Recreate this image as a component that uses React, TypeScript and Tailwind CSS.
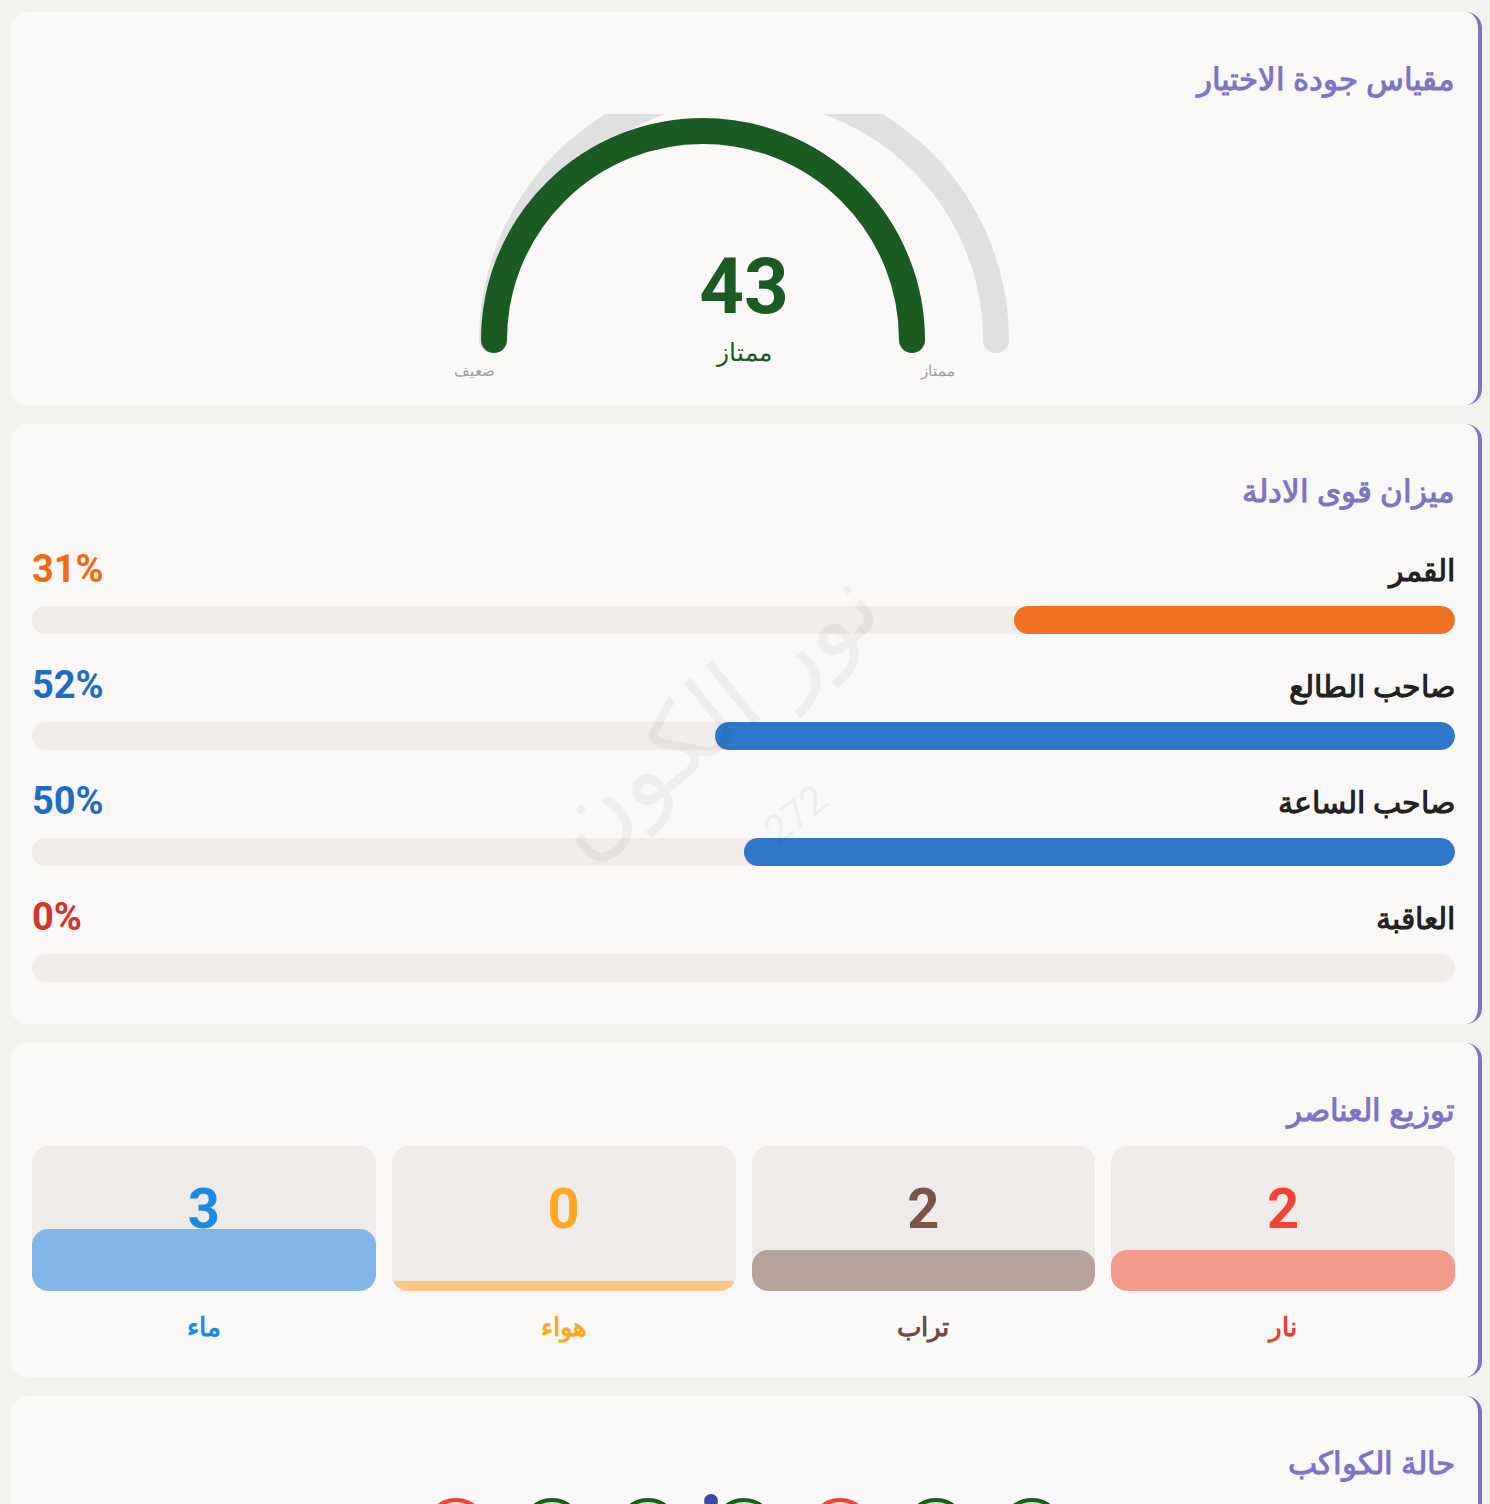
import React from "react";

const forces = [
  { id: "moon", label: "القمر", pct: 31, bar: "bg-[#f07022]", text: "text-[#f06a10]" },
  { id: "asc", label: "صاحب الطالع", pct: 52, bar: "bg-[#3077cc]", text: "text-[#1f6cc6]" },
  { id: "hour", label: "صاحب الساعة", pct: 50, bar: "bg-[#3077cc]", text: "text-[#1f6cc6]" },
  { id: "end", label: "العاقبة", pct: 0, bar: "bg-[#d33a2c]", text: "text-[#d0362a]" },
];

// listed right to left
const elements = [
  { id: "fire", label: "نار", count: 2, num: "text-[#f44336]", fill: "bg-[#f29a8c]", name: "text-[#e8402f]" },
  { id: "earth", label: "تراب", count: 2, num: "text-[#795548]", fill: "bg-[#b5a298]", name: "text-[#6d4c41]" },
  { id: "air", label: "هواء", count: 0, num: "text-[#ffa726]", fill: "bg-[#f8c884]", name: "text-[#f9a825]" },
  { id: "water", label: "ماء", count: 3, num: "text-[#1e88e5]", fill: "bg-[#82b5e8]", name: "text-[#1e88e5]" },
];

// listed right to left
const planets = [
  { id: "p1", bad: false, dot: false },
  { id: "p2", bad: false, dot: false },
  { id: "p3", bad: true, dot: false },
  { id: "p4", bad: false, dot: true },
  { id: "p5", bad: false, dot: false },
  { id: "p6", bad: false, dot: false },
  { id: "p7", bad: true, dot: false },
];

const Card = ({ title, children, className = "" }: { title: string; children: React.ReactNode; className?: string }) => (
  <section
    className={`rounded-2xl bg-[#f9f8f6] border-r-4 border-[#7f73c8] pl-[21px] pr-[23px] pt-[46px] ${className}`}
  >
    <h2 className="text-[31px] leading-10 font-semibold text-[#7e74c6]">{title}</h2>
    {children}
  </section>
);

const Gauge = () => (
  <div dir="ltr" className="mt-4 flex justify-center">
    <svg width="600" height="271" viewBox="0 0 600 271">
      <path d="M 48 226 A 252 252 0 0 1 552 226" fill="none" stroke="#e0e0e0" strokeWidth="26" strokeLinecap="round" />
      <path d="M 50 226 A 209 209 0 0 1 468 226" fill="none" stroke="#1b5a20" strokeWidth="26" strokeLinecap="round" />
      <text x="300" y="199" textAnchor="middle" fontSize="78" fontWeight="700" fill="#1b5a20" fontFamily="Roboto, sans-serif">
        43
      </text>
      <text x="300" y="247" textAnchor="middle" fontSize="25" fill="#1b5a20" fontFamily="'Noto Sans', sans-serif">
        ممتاز
      </text>
      <text x="30" y="262" textAnchor="middle" fontSize="15" fill="#9e9e9e" fontFamily="'Noto Sans', sans-serif">
        ضعيف
      </text>
      <text x="494" y="262" textAnchor="middle" fontSize="15" fill="#9e9e9e" fontFamily="'Noto Sans', sans-serif">
        ممتاز
      </text>
    </svg>
  </div>
);

export default function App() {
  return (
    <div
      dir="rtl"
      className="min-h-screen bg-[#f3f2ef] pl-[11px] pr-[8px] pt-3 pb-10 flex flex-col gap-[19px]"
      style={{ fontFamily: "'Noto Sans', Roboto, sans-serif" }}
    >
      <Card title="مقياس جودة الاختيار" className="pb-5">
        <Gauge />
      </Card>

      <Card title="ميزان قوى الادلة" className="pb-[42px]">
        <div className="mt-[39px] flex flex-col gap-[31px]">
          {forces.map((f) => (
            <div key={f.id}>
              <div className="flex h-10 items-center justify-between">
                <span className="text-[30px] font-semibold text-[#222]">{f.label}</span>
                <span className={`text-[38px] font-bold ${f.text}`} style={{ fontFamily: "Roboto, sans-serif" }}>
                  {f.pct}%
                </span>
              </div>
              <div className="mt-[17px] h-7 rounded-full bg-[#efece9] overflow-hidden">
                <div className={`h-full rounded-full ${f.bar}`} style={{ width: `${f.pct}%` }} />
              </div>
            </div>
          ))}
        </div>
      </Card>

      <Card title="توزيع العناصر" className="pb-[35px]">
        <div className="mt-[17px] grid grid-cols-4 gap-4">
          {elements.map((e) => (
            <div key={e.id} className="flex flex-col items-center">
              <div className="relative h-[145px] w-full overflow-hidden rounded-2xl bg-[#efebe8]">
                <div
                  className={`absolute bottom-0 left-0 right-0 rounded-2xl ${e.fill}`}
                  style={{ height: e.count ? `${(e.count / 7) * 100}%` : "10px" }}
                />
                <div
                  className={`relative pt-[36px] text-center text-[56px] leading-[54px] font-bold ${e.num}`}
                  style={{ fontFamily: "Roboto, sans-serif" }}
                >
                  {e.count}
                </div>
              </div>
              <span className={`mt-[19px] text-[26px] leading-8 font-semibold ${e.name}`}>{e.label}</span>
            </div>
          ))}
        </div>
      </Card>

      <Card title="حالة الكواكب" className="pb-10">
        <div className="mt-4 flex justify-center gap-8">
          {planets.map((p) => (
            <div
              key={p.id}
              className={`relative h-16 w-16 rounded-full border-4 ${
                p.bad ? "border-[#f44336] bg-[#fde3df]" : "border-[#1b5e20] bg-[#c8e6c9]"
              }`}
            >
              {p.dot && <span className="absolute -top-2 -left-3 h-3.5 w-3.5 rounded-full bg-[#3949ab]" />}
            </div>
          ))}
        </div>
      </Card>

      {/* watermark */}
      <div className="pointer-events-none fixed inset-0 flex items-center justify-center">
        <p className="-rotate-[39deg] text-center text-[100px] leading-[1.1] text-[rgba(0,0,0,0.045)]">
          نور الكون
          <br />
          <span className="text-[40px]" style={{ fontFamily: "Roboto, sans-serif" }}>
            272
          </span>
        </p>
      </div>
    </div>
  );
}
